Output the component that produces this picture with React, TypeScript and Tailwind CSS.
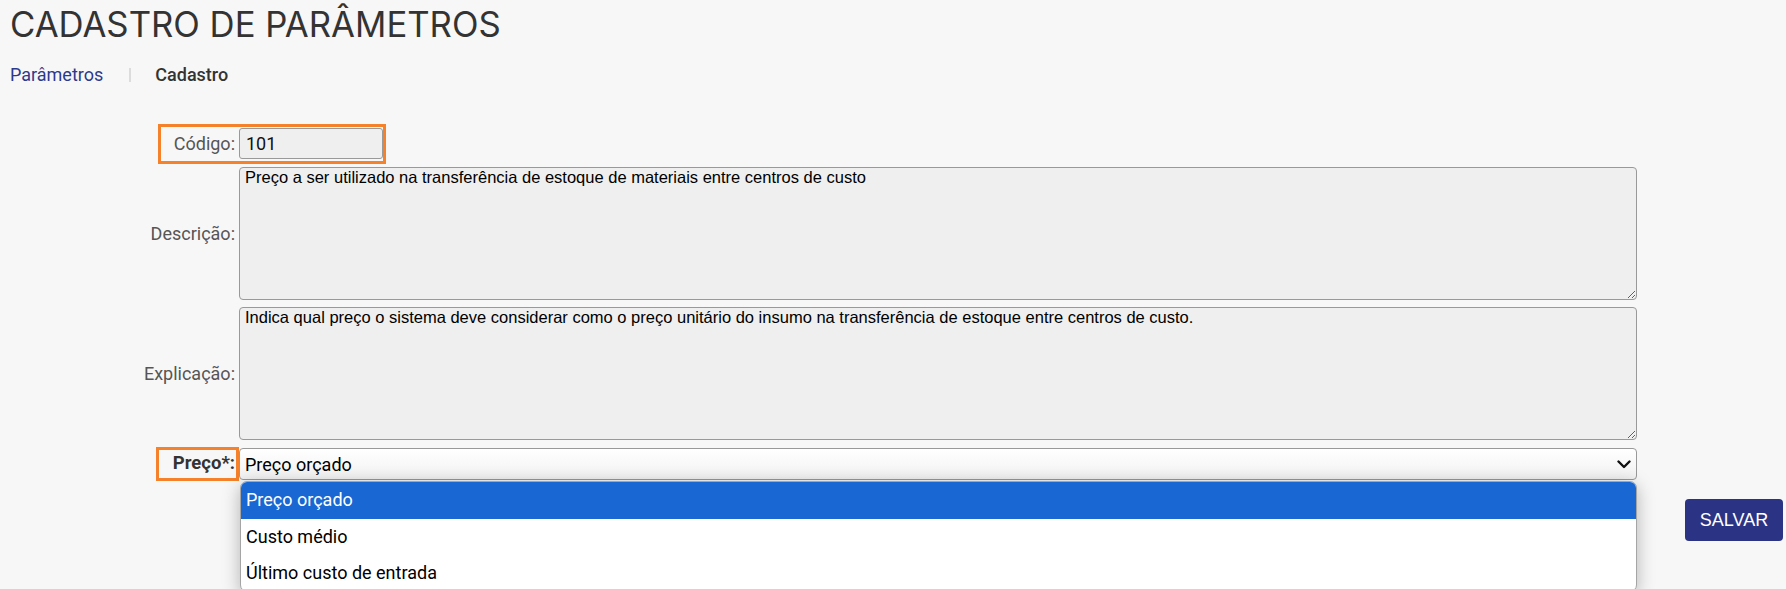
const options = ["Preço orçado", "Custo médio", "Último custo de entrada"];

export default function App() {
  return (
    <div className="min-h-screen bg-[#f7f7f7] font-['Roboto',sans-serif] text-[#333]">
      {/* Header */}
      <h1 className="pl-[10px] pt-[3px] font-['Inter',sans-serif] text-[34.7px] leading-[43px] font-normal text-[#333]">
        CADASTRO DE PARÂMETROS
      </h1>

      {/* Breadcrumb */}
      <nav className="mt-[18px] flex items-center pl-[10px] text-[18px] leading-[21px]">
        <a className="text-[#2d3a8c]">Parâmetros</a>
        <span className="ml-[26px] mr-[24px] h-[14px] w-[2px] bg-[#dcdcdc]" />
        <span className="font-medium text-[#333]">Cadastro</span>
      </nav>

      {/* Form */}
      <form className="mt-[43px] flex flex-col">
        <div className="relative flex items-center gap-[4px]">
          <label className="w-[235px] text-right text-[18px] text-[#555]">Código:</label>
          <input
            readOnly
            value="101"
            className="h-[31px] w-[144px] rounded-[3px] border border-[#999] bg-[#efefef] px-[6px] text-[18px] text-[#111] outline-none"
          />
          <div className="pointer-events-none absolute left-[158px] top-[-4px] h-[40px] w-[228px] border-[3px] border-[#f5822a]" />
        </div>

        <div className="mt-[8px] flex items-center gap-[4px]">
          <label className="w-[235px] text-right text-[18px] text-[#555]">Descrição:</label>
          <textarea
            readOnly
            value="Preço a ser utilizado na transferência de estoque de materiais entre centros de custo"
            className="h-[133px] w-[1398px] rounded-[4px] border border-[#999] bg-[#efefef] px-[5px] py-0 font-['Liberation_Sans',Arial,sans-serif] text-[16.5px] leading-[18px] text-black outline-none"
          />
        </div>

        <div className="mt-[7px] flex items-center gap-[4px]">
          <label className="w-[235px] text-right text-[18px] text-[#555]">Explicação:</label>
          <textarea
            readOnly
            value="Indica qual preço o sistema deve considerar como o preço unitário do insumo na transferência de estoque entre centros de custo."
            className="h-[133px] w-[1398px] rounded-[4px] border border-[#999] bg-[#efefef] px-[5px] py-0 font-['Liberation_Sans',Arial,sans-serif] text-[16.5px] leading-[18px] text-black outline-none"
          />
        </div>

        <div className="relative mt-[8px] flex items-center gap-[4px]">
          <label className="w-[235px] text-right text-[18.5px] font-bold text-[#333]">Preço*:</label>
          <div className="relative w-[1398px]">
            <div className="flex h-[32px] items-center justify-between rounded-[4px] border border-[#999] bg-gradient-to-b from-white to-[#f2f2f2] pl-[5px] pr-[5px] text-[18px] text-black">
              <span>Preço orçado</span>
              <svg width="14" height="9" viewBox="0 0 14 9" fill="none">
                <path d="M1.5 1.5 7 7l5.5-5.5" stroke="#111" strokeWidth="2.4" strokeLinecap="round" strokeLinejoin="round" />
              </svg>
            </div>
            <ul className="absolute left-[1px] right-0 top-full z-10 mt-[1px] overflow-hidden rounded-[7px] border border-[#a5a5a5] bg-white shadow-[0_4px_18px_rgba(0,0,0,0.28)]">
              {options.map((o, i) => (
                <li
                  key={o}
                  className={
                    i === 0
                      ? "flex h-[37px] items-center bg-[#1967d2] pb-[2px] pl-[5px] text-[18px] text-white"
                      : "flex h-[36px] items-center pb-[1px] pl-[5px] text-[18px] text-black"
                  }
                >
                  {o}
                </li>
              ))}
            </ul>
          </div>
          <div className="pointer-events-none absolute left-[156px] top-[-1px] h-[34px] w-[83px] border-[3px] border-[#f5822a]" />
        </div>

        <div className="mt-[19px] flex justify-end pr-[3px]">
          <button
            type="button"
            className="h-[42px] w-[98px] rounded-[4px] bg-[#2b3384] font-['Liberation_Sans',Arial,sans-serif] text-[18px] text-white"
          >
            SALVAR
          </button>
        </div>
      </form>
    </div>
  );
}
